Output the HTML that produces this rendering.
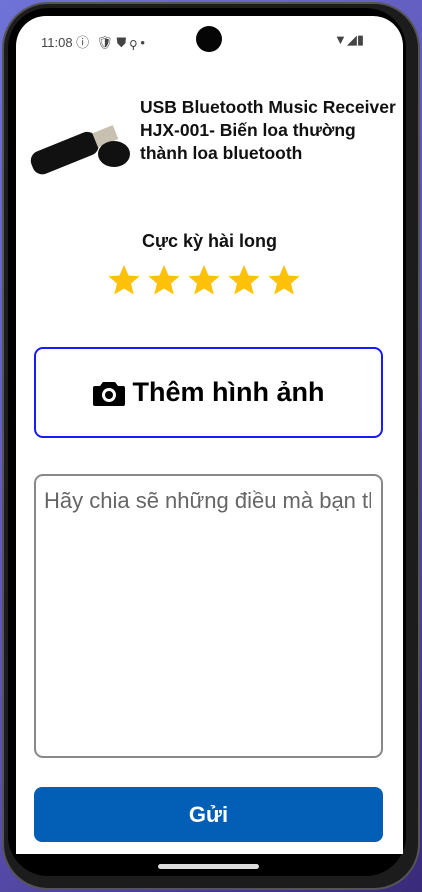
<!DOCTYPE html>
<html><head><meta charset="utf-8">
<style>
*{margin:0;padding:0;box-sizing:border-box}
html,body{width:422px;height:892px;overflow:hidden}
body{background:linear-gradient(135deg,#6f72d6,#5a4fb0 60%,#3a2a7a);font-family:"Liberation Sans",Roboto,sans-serif;position:relative}
.phone{position:absolute;left:2px;top:2px;width:418px;height:888px;background:#1c1c1c;border-radius:46px;border:2px solid #555}
.bezel{position:absolute;left:8px;top:8px;width:398px;height:868px;background:#000;border-radius:40px}
.screen{position:absolute;left:16px;top:16px;width:387px;height:838px;background:#fff;border-radius:30px 30px 0 0;overflow:hidden}
.abs{position:absolute}
.status{font-size:13px;color:#444}
.title{left:124px;top:80px;font-size:17.5px;font-weight:bold;line-height:23px;color:#111;white-space:nowrap}
.stars{left:92px;top:248px;display:flex;gap:7px}
.btn1{left:18px;top:331px;width:349px;height:91px;border:2px solid #1a1aff;border-radius:9px;display:flex;align-items:center;justify-content:center;font-size:27px;font-weight:bold;color:#000}
.ta{left:18px;top:458px;width:349px;height:284px;border:2px solid #888;border-radius:9px;padding:12px 0 12px 8px;font-size:22px;color:#666;white-space:nowrap;overflow:hidden}
.ta span{display:block;width:327px;overflow:hidden}
.send{left:18px;top:771px;width:349px;height:55px;background:#035fb6;border-radius:8px;color:#fff;font-size:22px;font-weight:bold;display:flex;align-items:center;justify-content:center}
.home{position:absolute;left:158px;top:864px;width:101px;height:5px;background:#ddd;border-radius:3px}
</style></head><body>
<div class="phone"></div>
<div class="bezel"></div>
<div class="screen">
 <div class="abs status" style="left:25px;top:16px">11:08 ⓘ &nbsp;🛡&#xFE0E; ⛊ ⚲ •</div>
 <div class="abs" style="left:180px;top:10px;width:26px;height:26px;border-radius:50%;background:#050505"></div>
 <div class="abs" style="left:318px;top:16px;font-size:13px;color:#444">▼◢▮</div>
 <svg class="abs" style="left:0;top:90px" width="120" height="70" viewBox="0 0 120 70">
  <g transform="rotate(-22 60 35)">
   <rect x="10" y="30" width="70" height="24" rx="10" fill="#111"/>
   <rect x="78" y="34" width="22" height="15" fill="#c8c0b0"/>
  </g>
  <ellipse cx="98" cy="48" rx="16" ry="13" fill="#111"/>
 </svg>
 <div class="abs title">USB Bluetooth Music Receiver<br>HJX-001- Biến loa thường<br>thành loa bluetooth</div>
 <div class="abs" style="left:0;width:387px;top:215px;text-align:center;font-size:18px;font-weight:bold;color:#111">Cực kỳ hài long</div>
 <div class="abs stars">
  <svg width="272" height="34" viewBox="0 0 272 34">
   <defs><path id="s" d="M16 1 L20.5 11.5 L31.5 12.3 L23 19.5 L25.8 30.5 L16 24.5 L6.2 30.5 L9 19.5 L0.5 12.3 L11.5 11.5Z" fill="#ffc107"/></defs>
   <use href="#s" x="0"/><use href="#s" x="40"/><use href="#s" x="80"/><use href="#s" x="120"/><use href="#s" x="160"/>
  </svg>
 </div>
 <div class="abs btn1"><svg width="32" height="26" viewBox="0 0 32 26" style="margin-right:8px"><path d="M10 2h12l3 4h5a2 2 0 0 1 2 2v16a2 2 0 0 1-2 2H2a2 2 0 0 1-2-2V8a2 2 0 0 1 2-2h5z" fill="#000"/><circle cx="16" cy="15" r="7" fill="#fff"/><circle cx="16" cy="15" r="4" fill="#000"/></svg>Thêm hình ảnh</div>
 <div class="abs ta"><span>Hãy chia sẽ những điều mà bạn thích</span></div>
 <div class="abs send">Gửi</div>
</div>
<div class="home"></div>
</body></html>
